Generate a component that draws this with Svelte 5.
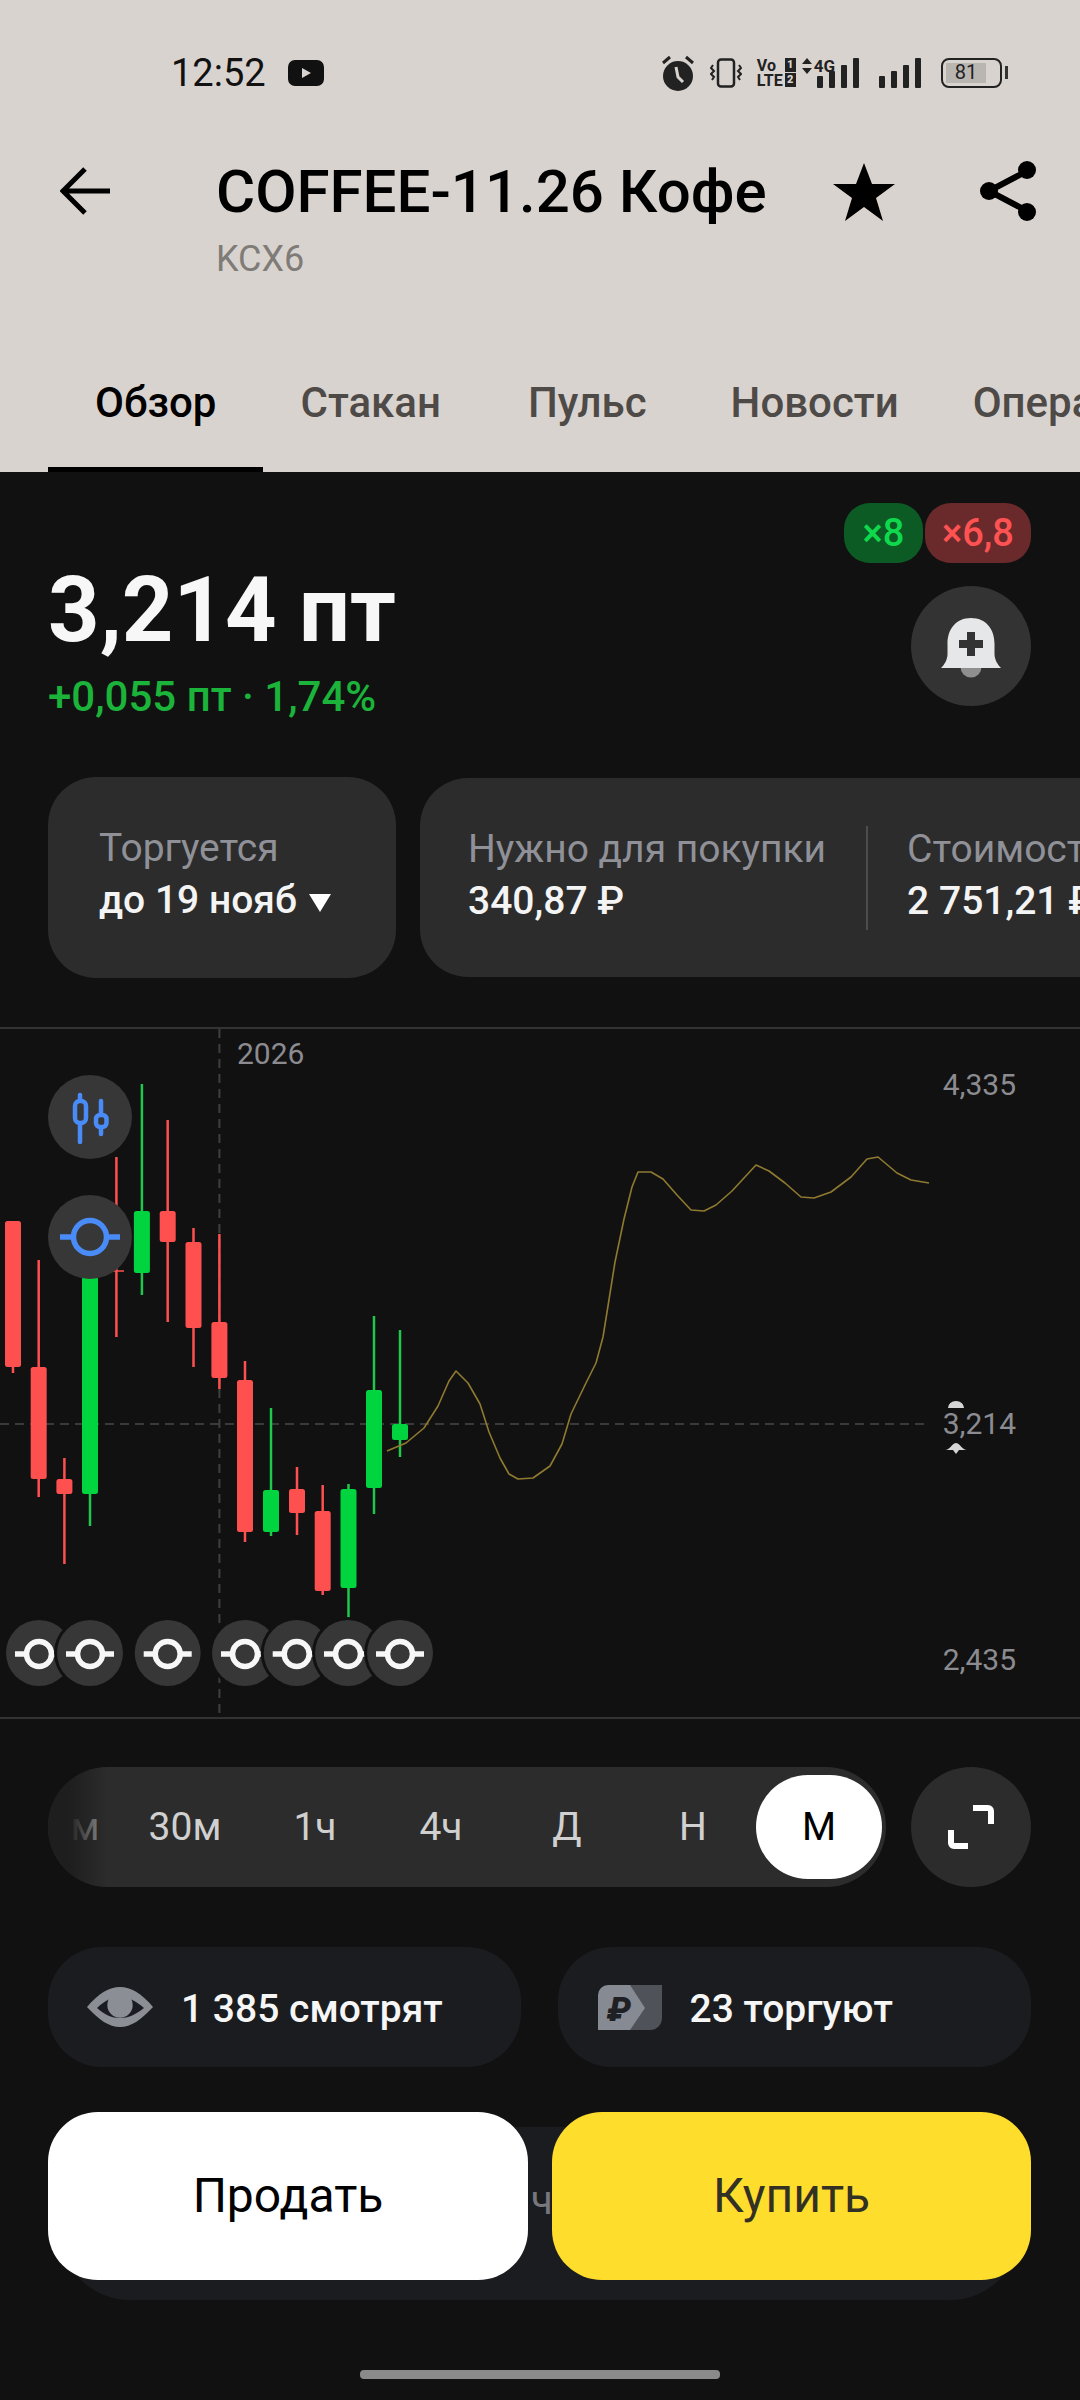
<script>
	// x, wick top, body top, body bottom, wick bottom, up?
	const candles = [
		[13, 1221, 1221, 1367, 1373, false],
		[38.7, 1260, 1367, 1479, 1497, false],
		[64.4, 1458, 1479, 1494, 1564, false],
		[90, 1260, 1262, 1494, 1526, true],
		[141.9, 1084, 1211, 1273, 1295, true],
		[167.7, 1120, 1211, 1242, 1322, false],
		[193.5, 1228, 1242, 1328, 1367, false],
		[219.4, 1234, 1322, 1378, 1389, false],
		[245, 1361, 1380, 1532, 1542, false],
		[271, 1408, 1490, 1532, 1536, true],
		[297, 1467, 1489, 1513, 1535, false],
		[322.7, 1485, 1511, 1591, 1595, false],
		[348.5, 1484, 1489, 1588, 1618, true],
		[374, 1316, 1390, 1488, 1514, true],
		[400, 1330, 1424, 1440, 1457, true]
	];

	const forecast = [
		[387, 1451], [406, 1443], [424, 1428], [438, 1406], [449, 1381], [456, 1371], [468, 1383],
		[480, 1404], [489, 1432], [500, 1458], [509, 1474], [518, 1479], [533, 1478], [550, 1466],
		[562, 1444], [571, 1414], [585, 1385], [596, 1363], [603, 1337], [608, 1306], [615, 1262],
		[624, 1219], [632, 1187], [638, 1172], [651, 1172], [663, 1179], [677, 1195], [691, 1210],
		[704, 1211], [716, 1205], [732, 1191], [756, 1165], [769, 1171], [785, 1183], [801, 1197],
		[814, 1198], [831, 1192], [851, 1177], [867, 1159], [878, 1157], [897, 1173], [911, 1180], [929, 1183]
	];
	const forecastPoints = forecast.map((p) => p.join(',')).join(' ');

	const markers = [39, 90, 167.7, 245, 296.7, 348, 400];
	const periods = ['15м', '30м', '1ч', '4ч', 'Д', 'Н', 'М'];
	const tabs = ['Обзор', 'Стакан', 'Пульс', 'Новости', 'Операции'];
</script>

<div class="screen">
	<header class="top">
		<div class="status">
			<div class="status-left">
				<span class="clock">12:52</span>
				<svg width="36" height="26" viewBox="0 0 36 26"><rect width="36" height="26" rx="7" fill="#111"/><path d="M14 8l9 5-9 5z" fill="#d9d3cf"/></svg>
			</div>
			<div class="status-right">
				<svg width="34" height="36" viewBox="0 0 34 36">
					<circle cx="17" cy="21" r="15" fill="#222"/>
					<path d="M15 12l2 10 5 5" fill="none" stroke="#d9d3cf" stroke-width="3"/>
					<path d="M2 8l7-6M32 8l-7-6" stroke="#222" stroke-width="3"/>
				</svg>
				<svg class="vibrate" width="32" height="30" viewBox="0 0 32 30" fill="none" stroke="#222">
					<rect x="8" y="1.5" width="16" height="27" rx="3" stroke-width="2.5"/>
					<path d="M3 7l-2 3 3 3-3 3 3 3-2 3M29 7l2 3-3 3 3 3-3 3 2 3" stroke-width="2"/>
				</svg>
				<div class="volte">
					<span>Vo</span><b>1</b>
					<span>LTE</span><b>2</b>
				</div>
				<div class="net">
					<svg width="10" height="16" viewBox="0 0 10 16"><path d="M5 0l5 6H0zM5 16L0 10h10z" fill="#222"/></svg>
					<span>4G</span>
				</div>
				<svg width="44" height="30" viewBox="0 0 44 30" fill="#222">
					<rect x="0" y="18" width="6" height="12" rx="1"/>
					<rect x="12" y="13" width="6" height="17" rx="1"/>
					<rect x="24" y="7" width="6" height="23" rx="1"/>
					<rect x="36" y="0" width="6" height="30" rx="1"/>
				</svg>
				<svg width="44" height="30" viewBox="0 0 44 30" fill="#222">
					<rect x="0" y="18" width="6" height="12" rx="1"/>
					<rect x="12" y="13" width="6" height="17" rx="1"/>
					<rect x="24" y="7" width="6" height="23" rx="1"/>
					<rect x="36" y="0" width="6" height="30" rx="1"/>
				</svg>
				<div class="battery"><span>81</span></div>
			</div>
		</div>

		<div class="titlebar">
			<button class="plain back" aria-label="Назад">
				<svg width="50" height="48" viewBox="0 0 50 48" fill="none" stroke="#000" stroke-width="5"><path d="M25 2L3 24l22 22M3 24h47"/></svg>
			</button>
			<div class="titles">
				<h1>COFFEE-11.26 Кофе</h1>
				<div class="ticker">KCX6</div>
			</div>
			<button class="plain star" aria-label="В избранное">
				<svg width="62" height="58" viewBox="0 0 62 58"><path d="M31 0l8 21h23L43 35l7 23-19-14-19 14 7-23L0 21h23z" fill="#000"/></svg>
			</button>
			<button class="plain share" aria-label="Поделиться">
				<svg width="56" height="60" viewBox="0 0 56 60" fill="none"><path d="M47 10L9 30l38 20" stroke="#000" stroke-width="6"/><circle cx="47" cy="9" r="9" fill="#000"/><circle cx="9" cy="30" r="9" fill="#000"/><circle cx="47" cy="51" r="9" fill="#000"/></svg>
			</button>
		</div>

		<nav class="tabs">
			{#each tabs as tab, i}
				<span class="tab" class:active={i === 0}>{tab}</span>
			{/each}
		</nav>
	</header>

	<section class="summary">
		<div class="price-block">
			<div class="price">3,214 пт</div>
			<div class="change">+0,055 пт · 1,74%</div>
		</div>
		<div class="summary-side">
			<div class="leverage">
				<span class="lev long">×8</span>
				<span class="lev short">×6,8</span>
			</div>
			<button class="round bell" aria-label="Уведомление">
				<svg width="60" height="60" viewBox="0 0 60 60">
					<circle cx="30" cy="49" r="10.5" fill="#8f8f8f"/>
					<path d="M30 0C15 0 6.5 11 6.5 26v10C6.5 42 3 47 0 50h60c-3-3-6.5-8-6.5-14V26C53.5 11 45 0 30 0z" fill="#e6e7e8"/>
					<path d="M30 14v24M18 26h24" stroke="#333" stroke-width="8"/>
				</svg>
			</button>
		</div>
	</section>

	<section class="cards">
		<div class="card first">
			<div class="label">Торгуется</div>
			<div class="value">до 19 нояб <svg width="22" height="20" viewBox="0 0 22 20"><path d="M0 1h22L11 19z" fill="#fff"/></svg></div>
		</div>
		<div class="card second">
			<div class="cell">
				<div class="label">Нужно для покупки</div>
				<div class="value">340,87 ₽</div>
			</div>
			<div class="sep"></div>
			<div class="cell">
				<div class="label">Стоимость лота</div>
				<div class="value">2 751,21 ₽</div>
			</div>
		</div>
	</section>

	<section class="chart">
		<svg class="plot" width="1080" height="692" viewBox="0 1027 1080 692">
			<line x1="0" x2="929" y1="1424" y2="1424" stroke="#3a3a3a" stroke-width="2" stroke-dasharray="9 6"/>
			<line x1="219.4" x2="219.4" y1="1029" y2="1717" stroke="#3f3f3f" stroke-width="2" stroke-dasharray="9 6"/>

			<g stroke="#ff5050" stroke-width="2.5"><line x1="116.4" x2="116.4" y1="1157" y2="1337"/><line x1="113" x2="124" y1="1271" y2="1271" stroke-width="1.5"/></g>
			{#each candles as [x, hi, top, bottom, lo, up]}
				<line x1={x} x2={x} y1={hi} y2={lo} stroke={up ? '#1fc74b' : '#ff5050'} stroke-width="2.5"/>
				<rect x={x - 8} y={top} width="16" height={bottom - top} rx="2.5" fill={up ? '#00d53f' : '#ff5050'}/>
			{/each}

			<polyline points={forecastPoints} fill="none" stroke="#8f7a30" stroke-width="1.6" stroke-linejoin="round"/>

			<circle cx="90" cy="1117" r="42" fill="#373737"/>
			<g fill="none" stroke="#4a8cf7" stroke-linecap="round">
				<path d="M80 1095v47M101 1101v33" stroke-width="4.5"/>
				<rect x="75" y="1101" width="11" height="22" rx="5" stroke-width="4.5" fill="#373737"/>
				<rect x="96" y="1115" width="10.5" height="12" rx="4" stroke-width="4.5" fill="#373737"/>
			</g>
			<circle cx="90" cy="1237" r="42" fill="#373737"/>
			<g fill="none" stroke="#4a8cf7" stroke-width="5.5">
				<circle cx="90" cy="1237" r="16.5"/>
				<path d="M60 1237h14M106 1237h14"/>
			</g>

			{#each markers as x}
				<circle cx={x} cy="1653" r="36" fill="#111"/>
				<circle cx={x} cy="1653" r="33" fill="#373737"/>
				<g fill="none" stroke="#f7f7f7" stroke-width="5.5">
					<circle cx={x} cy="1654" r="12.5"/>
					<path d={`M${x - 24} 1654h12M${x + 12} 1654h12`}/>
				</g>
			{/each}

			<text x="237" y="1064" class="axis">2026</text>
			<text x="1016" y="1095" class="axis end">4,335</text>
			<path d="M948 1408a8 7 0 0 1 16 0z" fill="#d5d5d5"/>
			<text x="1016" y="1434" class="axis end">3,214</text>
			<path d="M945 1450c5 0 6-6 11-7 5 1 6 7 11 7h-8l-3 4-3-4z" fill="#d5d5d5"/>
			<text x="1016" y="1670" class="axis end">2,435</text>
		</svg>
	</section>

	<section class="controls">
		<div class="periods">
			<div class="period-fade"></div>
			{#each periods as p}
				<span class="period" class:selected={p === 'М'}>{p}</span>
			{/each}
		</div>
		<button class="round expand" aria-label="На весь экран">
			<svg width="46" height="46" viewBox="0 0 46 46" fill="none" stroke="#fff" stroke-width="6"><path d="M25 4h15a3 3 0 0 1 3 3v13M3 26v13a3 3 0 0 0 3 3h14"/></svg>
		</button>
	</section>

	<section class="social">
		<div class="pill">
			<svg width="66" height="40" viewBox="0 0 66 40">
				<path d="M0 20C12 6 22 0 33 0s21 6 33 20C54 33 44 40 33 40S12 33 0 20z" fill="#8b8e94"/>
				<path d="M10 21C18 13 26 10 33 10s15 3 24 11C48 28 41 31 33 31S18 28 10 21z" fill="#1b1c22"/>
				<circle cx="33" cy="18" r="12.7" fill="#8b8e94"/>
			</svg>
			<span>1 385 смотрят</span>
		</div>
		<div class="pill trading">
			<svg width="64" height="45" viewBox="0 0 64 45">
				<path d="M30 0h34v33a12 12 0 0 1-12 12H30z" fill="#4f5258"/>
				<path d="M10 0h22l15 23-15 22H0V10A10 10 0 0 1 10 0z" fill="#868a92"/>
				<text x="9" y="36" class="rub">₽</text>
			</svg>
			<span>23 торгуют</span>
		</div>
	</section>

	<section class="trade">
		<div class="trade-back"><span>ч</span></div>
		<div class="trade-buttons">
			<button class="sell">Продать</button>
			<button class="buy">Купить</button>
		</div>
	</section>

	<div class="home"></div>
</div>

<style>
	:global(body) {
		background: #111;
	}
	.screen {
		width: 1080px;
		height: 2400px;
		overflow: hidden;
		background: #111112;
		color: #fff;
		font-family: Roboto, "Liberation Sans", sans-serif;
		position: relative;
	}
	button {
		border: 0;
		padding: 0;
		font-family: inherit;
		background: none;
	}
	.plain {
		display: flex;
		align-items: center;
		justify-content: center;
	}

	.top {
		height: 472px;
		background: #d9d3cf;
		color: #000;
		overflow: hidden;
	}
	.status {
		height: 145px;
		display: flex;
		align-items: center;
		justify-content: space-between;
		padding: 0 78px 0 171px;
		box-sizing: border-box;
	}
	.status-left {
		display: flex;
		align-items: center;
		gap: 22px;
	}
	.clock {
		font-size: 38px;
		color: #111;
	}
	.status-right {
		display: flex;
		align-items: center;
		gap: 18px;
		color: #222;
	}
	.status-right > svg:first-child {
		margin-right: -3px;
	}
	.vibrate {
		margin-right: -3px;
	}
	.volte {
		display: grid;
		grid-template-columns: auto 11px;
		column-gap: 2px;
		margin-right: -12px;
		font-size: 16px;
		font-weight: 700;
		line-height: 15px;
	}
	.volte b {
		background: #222;
		color: #d9d3cf;
		font-size: 11px;
		text-align: center;
		line-height: 14px;
		height: 14px;
	}
	.net {
		display: flex;
		align-items: flex-start;
		gap: 2px;
		height: 30px;
		margin-right: -36px;
		font-size: 17px;
		font-weight: 700;
		line-height: 16px;
	}
	.battery {
		width: 61px;
		height: 30px;
		box-sizing: border-box;
		border: 2.5px solid #222;
		border-radius: 8px;
		padding: 3px 14px 3px 3px;
		position: relative;
	}
	.battery::after {
		content: "";
		position: absolute;
		right: -8px;
		top: 6px;
		width: 3px;
		height: 13px;
		background: #333;
	}
	.battery span {
		display: block;
		height: 100%;
		background: #b9b5b1;
		font-size: 20px;
		line-height: 19px;
		text-align: center;
		color: #222;
	}

	.titlebar {
		display: flex;
		align-items: flex-start;
		height: 180px;
		padding-left: 60px;
	}
	.back {
		margin-top: 22px;
		width: 50px;
	}
	.titles {
		margin-left: 106px;
		width: 617px;
	}
	.titles h1 {
		margin: 13px 0 0;
		font-size: 60px;
		font-weight: 500;
		line-height: 68px;
		white-space: nowrap;
	}
	.ticker {
		margin-top: 11px;
		font-size: 36px;
		line-height: 44px;
		color: #7f7b77;
	}
	.star {
		margin-top: 18px;
	}
	.share {
		margin-top: 16px;
		margin-left: 85px;
	}

	.tabs {
		display: flex;
		height: 147px;
		padding-left: 48px;
		white-space: nowrap;
		box-sizing: border-box;
	}
	.tab {
		font-size: 42px;
		font-weight: 500;
		line-height: 60px;
		height: 149px;
		margin-top: -2px;
		padding: 50px 0 0;
		margin-left: 87px;
		box-sizing: border-box;
		color: #4e4a47;
	}
	.tab.active {
		margin-left: 0;
		padding: 50px 47px 0;
		color: #000;
		border-bottom: 5px solid #000;
	}
	.tab:nth-child(2) {
		margin-left: 37px;
	}
	.tab:nth-child(4) {
		margin-left: 84px;
	}
	.tab:nth-child(5) {
		margin-left: 74px;
	}

	.summary {
		display: flex;
		justify-content: space-between;
		height: 305px;
		padding: 0 49px 0 48px;
	}
	.price {
		margin-top: 87px;
		font-size: 90px;
		font-weight: 700;
		line-height: 104px;
		color: #f7f7f8;
	}
	.change {
		margin-top: 10px;
		font-size: 42px;
		font-weight: 500;
		line-height: 48px;
		color: #1bb339;
	}
	.summary-side {
		display: flex;
		flex-direction: column;
		align-items: flex-end;
		padding-top: 31px;
	}
	.leverage {
		display: flex;
		gap: 2px;
		height: 60px;
	}
	.lev {
		height: 60px;
		border-radius: 26px;
		font-size: 38px;
		font-weight: 500;
		line-height: 60px;
		text-align: center;
		box-sizing: border-box;
	}
	.lev.long {
		width: 79px;
		background: #0c5a24;
		color: #0fd84c;
	}
	.lev.short {
		width: 106px;
		background: #6a2a2b;
		color: #ff5252;
	}
	.round {
		width: 120px;
		height: 120px;
		border-radius: 50%;
		display: flex;
		align-items: center;
		justify-content: center;
	}
	.bell {
		margin-top: 23px;
		background: #333;
	}
	.bell svg {
		margin-top: 4px;
	}

	.cards {
		display: flex;
		gap: 24px;
		height: 250px;
		padding-left: 48px;
		align-items: flex-start;
	}
	.card {
		height: 201px;
		border-radius: 48px;
		background: #2c2c2c;
		box-sizing: border-box;
		flex: none;
	}
	.card.first {
		width: 348px;
		padding: 49px 0 0 51px;
	}
	.card.second {
		display: flex;
		width: 800px;
		padding: 49px 0 0 48px;
		margin-top: 1px;
		height: 199px;
	}
	.cell {
		white-space: nowrap;
	}
	.sep {
		width: 2px;
		height: 104px;
		margin: -1px 39px 0 40px;
		background: #4d4d4d;
	}
	.label {
		font-size: 39px;
		line-height: 44px;
		color: #909198;
		white-space: nowrap;
	}
	.value {
		margin-top: 8px;
		font-size: 39px;
		font-weight: 500;
		line-height: 44px;
		color: #f4f4f4;
		white-space: nowrap;
	}
	.value svg {
		margin-left: 2px;
	}

	.chart {
		height: 692px;
		border-top: 2px solid #333;
		border-bottom: 2px solid #333;
		box-sizing: border-box;
		position: relative;
	}
	.plot {
		position: absolute;
		left: 0;
		top: -2px;
	}
	.axis {
		font-size: 30px;
		fill: #8b8b90;
	}
	.axis.end {
		text-anchor: end;
	}

	.controls {
		display: flex;
		justify-content: space-between;
		padding: 48px 49px 0 48px;
		height: 228px;
		box-sizing: border-box;
	}
	.periods {
		position: relative;
		display: flex;
		align-items: center;
		width: 838px;
		height: 120px;
		border-radius: 60px;
		overflow: hidden;
		background: #2c2c2c;
		box-sizing: border-box;
		padding-right: 4px;
	}
	.period-fade {
		position: absolute;
		left: 0;
		top: 0;
		bottom: 0;
		width: 60px;
		background: linear-gradient(90deg, #1e1e1e 35%, rgba(44, 44, 44, 0.35));
		z-index: 1;
	}
	.period {
		flex: none;
		width: 126px;
		height: 104px;
		border-radius: 52px;
		font-size: 39px;
		line-height: 104px;
		text-align: center;
		color: #d0d0d0;
	}
	.period:first-of-type {
		margin-left: -48px;
	}
	.period:nth-of-type(2) {
		width: 118px;
		margin-right: 8px;
	}
	.period.selected {
		background: #fff;
		color: #000;
	}
	.expand {
		background: #2c2c2c;
	}

	.social {
		display: flex;
		gap: 37px;
		padding: 0 49px 0 48px;
		height: 165px;
	}
	.pill {
		flex: 1;
		height: 120px;
		border-radius: 54px;
		background: #1b1c1f;
		display: flex;
		align-items: center;
		gap: 28px;
		padding-left: 39px;
		box-sizing: border-box;
		font-size: 39px;
		font-weight: 500;
		color: #f6f6f6;
	}
	.pill span {
		padding-top: 3px;
	}
	.pill.trading {
		padding-left: 40px;
	}
	.rub {
		font-size: 34px;
		font-weight: 900;
		font-style: italic;
		fill: #1e2024;
	}

	.trade {
		position: relative;
		height: 188px;
	}
	.trade-back {
		position: absolute;
		left: 60px;
		right: 60px;
		top: 15px;
		height: 173px;
		background: #1b1c1f;
		border-radius: 70px;
		text-align: center;
		font-size: 40px;
		line-height: 90px;
		padding-top: 29px;
		box-sizing: border-box;
		color: #77787d;
	}
	.trade-back span {
		margin-left: 4px;
	}
	.trade-buttons {
		position: absolute;
		left: 48px;
		right: 49px;
		top: 0;
		display: grid;
		grid-template-columns: 480px 479px;
		gap: 24px;
	}
	.trade-buttons button {
		height: 168px;
		border-radius: 50px;
		font-size: 48px;
		font-weight: 400;
		padding-bottom: 2px;
	}
	.sell {
		background: #fff;
		color: #000;
	}
	.trade-buttons .buy {
		background: #ffdd2d;
		color: #333024;
	}

	.home {
		position: absolute;
		left: 360px;
		top: 2370px;
		width: 360px;
		height: 9px;
		border-radius: 4px;
		background: #8a8a8a;
	}
</style>
